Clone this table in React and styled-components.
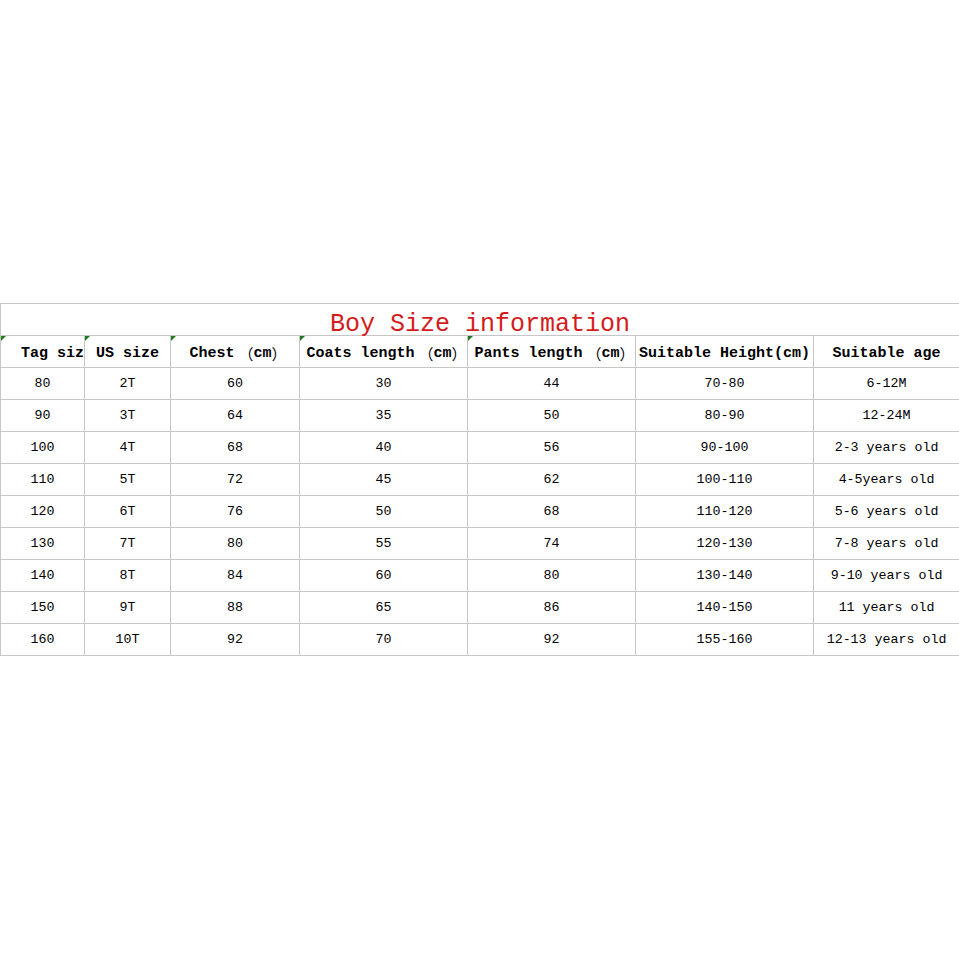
import React from "react";
import styled, { createGlobalStyle } from "styled-components";

const Global = createGlobalStyle`
  html, body { margin: 0; padding: 0; background: #fff; }
  body { font-family: "Liberation Mono", "DejaVu Sans Mono", monospace; }
`;

const Page = styled.div`
  width: 959px;
  height: 959px;
  padding-top: 303px;
  box-sizing: border-box;
  background: #fff;
`;

const Table = styled.table`
  border-collapse: collapse;
  table-layout: fixed;
  width: 959px;
  color: #000;
`;

const TitleCell = styled.td`
  height: 31px;
  padding: 0;
  border: 1px solid #c6c6c6;
  text-align: center;
  vertical-align: bottom;
  font-family: "Liberation Mono", "Noto Sans CJK SC", monospace;
  font-size: 25px;
  line-height: 20px;
  color: #d41c1c;
  white-space: nowrap;
`;

const HeadCell = styled.td`
  position: relative;
  height: 27px;
  padding: 4px 0 0 ${(p) => (p.$indent ? p.$indent + "px" : "0")};
  border: 1px solid #c6c6c6;
  text-align: ${(p) => (p.$indent ? "left" : "center")};
  vertical-align: middle;
  font-family: "Liberation Mono", "Noto Sans CJK SC", monospace;
  font-weight: bold;
  font-size: 15px;
  line-height: 16px;
  white-space: nowrap;
  overflow: hidden;
`;

const HeadText = styled.span`
  display: inline-block;
  height: 16px;
  line-height: 16px;
  vertical-align: top;
`;

const Wide = styled.span`
  display: inline-block;
  overflow: visible;
  width: ${(p) => (p.$open ? "19px" : "9px")};
  text-align: ${(p) => (p.$open ? "right" : "left")};
  font-family: "Noto Sans CJK SC", sans-serif;
  line-height: 16px;
  vertical-align: top;
  font-weight: normal;
  text-spacing-trim: space-all;
`;

const Flag = styled.span`
  position: absolute;
  left: 0;
  top: 0;
  width: 0;
  height: 0;
  border-top: 5px solid #1e7a1e;
  border-right: 5px solid transparent;
`;

const DataCell = styled.td`
  height: 31px;
  padding: 0;
  border: 1px solid #c6c6c6;
  text-align: center;
  font-family: "Liberation Mono", monospace;
  font-size: 13.3px;
  line-height: 16px;
  white-space: nowrap;
  overflow: hidden;
`;

const widths = [84, 86, 129, 168, 168, 178, 146];

const headers = [
  { t: "Tag size", flag: true, indent: 20 },
  { t: "US size", flag: true },
  { t: "Chest", cm: true, flag: true },
  { t: "Coats length", cm: true, flag: true },
  { t: "Pants length", cm: true, flag: true },
  { t: "Suitable Height(cm)" },
  { t: "Suitable age" },
];

const rows = [
  ["80", "2T", "60", "30", "44", "70-80", "6-12M"],
  ["90", "3T", "64", "35", "50", "80-90", "12-24M"],
  ["100", "4T", "68", "40", "56", "90-100", "2-3 years old"],
  ["110", "5T", "72", "45", "62", "100-110", "4-5years old"],
  ["120", "6T", "76", "50", "68", "110-120", "5-6 years old"],
  ["130", "7T", "80", "55", "74", "120-130", "7-8 years old"],
  ["140", "8T", "84", "60", "80", "130-140", "9-10 years old"],
  ["150", "9T", "88", "65", "86", "140-150", "11 years old"],
  ["160", "10T", "92", "70", "92", "155-160", "12-13 years old"],
];

export default function App() {
  return (
    <Page>
      <Global />
      <Table>
        <colgroup>
          {widths.map((w, i) => (
            <col key={i} style={{ width: w }} />
          ))}
        </colgroup>
        <tbody>
          <tr>
            <TitleCell colSpan={7}>Boy Size information</TitleCell>
          </tr>
          <tr>
            {headers.map((h, i) => (
              <HeadCell key={i} $indent={h.indent}>
                {h.flag && <Flag />}
                <HeadText>
                  {h.t}
                  {h.cm && (
                    <>
                      <Wide $open>（</Wide>cm<Wide>）</Wide>
                    </>
                  )}
                </HeadText>
              </HeadCell>
            ))}
          </tr>
          {rows.map((r, i) => (
            <tr key={i}>
              {r.map((c, j) => (
                <DataCell key={j}>{c}</DataCell>
              ))}
            </tr>
          ))}
        </tbody>
      </Table>
    </Page>
  );
}
